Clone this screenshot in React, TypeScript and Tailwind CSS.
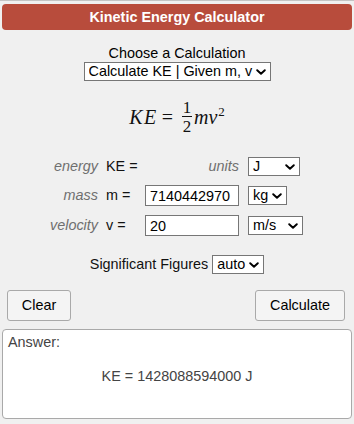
import React from "react";

function Chevron() {
  return (
    <svg width="10" height="6" viewBox="0 0 10 6" className="pointer-events-none absolute right-[5px] top-1/2 -translate-y-1/2">
      <path d="M1.2 1.2 L5 4.8 L8.8 1.2" stroke="#000" strokeWidth="1.9" fill="none" strokeLinecap="round" strokeLinejoin="round" />
    </svg>
  );
}

function Sel({ w, value, options }: { w: string; value: string; options: string[] }) {
  return (
    <span className={`relative inline-flex ${w}`}>
      <select
        defaultValue={value}
        className="h-[19px] w-full appearance-none rounded-none border border-[#767676] bg-white pl-[4px] pr-[16px] text-[14.4px] leading-[17px] text-black outline-none"
      >
        {options.map((o) => (
          <option key={o}>{o}</option>
        ))}
      </select>
      <Chevron />
    </span>
  );
}

function Row({ label, v, mid, unitW, unit, units, mt }: { label: string; v: string; mid: React.ReactNode; unitW: string; unit: string; units: string[]; mt: string }) {
  return (
    <div className={`flex h-[21px] items-center ${mt}`}>
      <div className="w-[98px] text-right italic text-[#6f6f6f]">{label}</div>
      <div className="w-[47px] pl-[8px] text-[#111]">{v}</div>
      <div className="flex w-[94px] justify-end">{mid}</div>
      <div className="ml-[9px] flex">
        <Sel w={unitW} value={unit} options={units} />
      </div>
    </div>
  );
}

export default function App() {
  return (
    <div className="min-h-[424px] w-[354px] border-t border-[#c4c4c4] bg-[#f0f0f0] font-['Liberation_Sans',Arial,sans-serif] text-[14.4px] leading-[17px] text-black">
      <div className="mx-[2px] mt-[3px] flex h-[26px] items-center justify-center rounded-[4px] bg-[#b84c3c] text-[14.4px] font-bold text-white">
        Kinetic Energy Calculator
      </div>

      <div className="mt-[15px] text-center leading-[17px]">Choose a Calculation</div>
      <div className="flex justify-center">
        <Sel w="w-[187px]" value="Calculate KE | Given m, v" options={["Calculate KE | Given m, v", "Calculate m | Given KE, v", "Calculate v | Given KE, m"]} />
      </div>

      <div className="mt-[17px] flex h-[38px] items-center justify-center font-['Liberation_Serif','Times_New_Roman',serif] text-[20px] text-[#111]">
        <span className="italic tracking-[1.5px]">KE</span>
        <span className="ml-[4px] mr-[9px] text-[20px]">=</span>
        <span className="inline-flex flex-col items-center text-[17px] leading-[17px]">
          <span>1</span>
          <span className="h-[1px] w-[10px] bg-[#111]"></span>
          <span className="mt-[1px]">2</span>
        </span>
        <span className="ml-[2px] italic">mv</span>
        <span className="-mt-[12px] ml-[1px] text-[13px]">2</span>
      </div>

      <div className="mt-[20px]">
        <Row
          mt=""
          label="energy"
          v="KE ="
          mid={<span className="italic text-[#6f6f6f]">units</span>}
          unitW="w-[52px]"
          unit="J"
          units={["J", "kJ", "MJ", "cal", "kcal"]}
        />
        <Row
          mt="mt-[8px]"
          label="mass"
          v="m ="
          mid={<input defaultValue="7140442970" className="h-[21px] w-[94px] border border-[#767676] bg-white px-[4px] text-[14.4px] text-black outline-none" />}
          unitW="w-[39px]"
          unit="kg"
          units={["kg", "g", "lb"]}
        />
        <Row
          mt="mt-[9px]"
          label="velocity"
          v="v ="
          mid={<input defaultValue="20" className="h-[21px] w-[94px] border border-[#767676] bg-white px-[4px] text-[14.4px] text-black outline-none" />}
          unitW="w-[55px]"
          unit="m/s"
          units={["m/s", "km/h", "mph"]}
        />
      </div>

      <div className="mt-[19px] flex items-center justify-center">
        <span className="text-[#111]">Significant Figures</span>
        <span className="ml-[4px] flex">
          <Sel w="w-[52px]" value="auto" options={["auto", "3", "4", "5", "6"]} />
        </span>
      </div>

      <div className="mt-[16px] flex justify-between pl-[7px] pr-[9px]">
        <button className="h-[31px] w-[64px] rounded-[3px] border border-[#a9a9a9] bg-[#f4f4f4] text-[14.4px] text-black">Clear</button>
        <button className="h-[31px] w-[90px] rounded-[3px] border border-[#a9a9a9] bg-[#f4f4f4] text-[14.4px] text-black">Calculate</button>
      </div>

      <div className="mx-[2px] mt-[8px] h-[90px] rounded-[4px] border border-[#a9a9a9] bg-white px-[5px] pt-[4px] text-[#444]">
        <div>Answer:</div>
        <div className="mt-[17px] text-center">KE = 1428088594000 J</div>
      </div>
    </div>
  );
}
